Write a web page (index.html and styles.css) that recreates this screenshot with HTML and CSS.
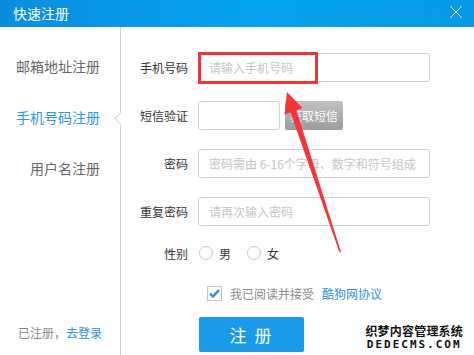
FILE: index.html
```html
<!DOCTYPE html>
<html lang="zh-CN">
<head>
    <meta charset="UTF-8">
    <meta name="viewport" content="width=device-width, initial-scale=1.0">
    <title>快速注册</title>
    <link rel="stylesheet" href="styles.css">
</head>
<body>
    <div class="dialog">
        <div class="header">
            <span class="title">快速注册</span>
            <svg class="close" width="12" height="12" viewBox="0 0 12 12">
                <path d="M0.5 0.5 L11.5 11.5 M11.5 0.5 L0.5 11.5" stroke="#fff" stroke-width="1" fill="none"/>
            </svg>
        </div>

        <div class="main">
            <div class="side">
                <div class="tab">邮箱地址注册</div>
                <div class="tab active">手机号码注册</div>
                <div class="tab">用户名注册</div>
                <div class="login-link">已注册，<a href="#">去登录</a></div>
                <span class="notch"></span>
            </div>

            <div class="form">
                <div class="row">
                    <label>手机号码</label>
                    <input type="text" class="field" placeholder="请输入手机号码">
                </div>
                <div class="row">
                    <label>短信验证</label>
                    <input type="text" class="field short">
                    <button class="sms-btn">获取短信</button>
                </div>
                <div class="row">
                    <label>密码</label>
                    <input type="password" class="field" placeholder="密码需由 6-16个字母、数字和符号组成">
                </div>
                <div class="row">
                    <label>重复密码</label>
                    <input type="password" class="field" placeholder="请再次输入密码">
                </div>
                <div class="row gender-row">
                    <label>性别</label>
                    <span class="radio"></span><span class="radio-text">男</span>
                    <span class="radio"></span><span class="radio-text">女</span>
                </div>
                <div class="agree-row">
                    <span class="checkbox">
                        <svg width="11" height="9" viewBox="0 0 11 9">
                            <path d="M1 4.5 L4 7.5 L10 1" stroke="#2a8de2" stroke-width="2.4" fill="none"/>
                        </svg>
                    </span>
                    <span class="agree-text">我已阅读并接受</span>
                    <a href="#" class="agree-link">酷狗网协议</a>
                </div>
                <button class="submit">注 册</button>
            </div>
        </div>

        <!-- annotation layered on the screenshot -->
        <div class="highlight"></div>
        <svg class="arrow" width="474" height="355" viewBox="0 0 474 355">
            <polygon points="287,92 302.5,108 296.5,110.5 341,252 339.5,252.4 290.5,112.5 284.5,114.5" fill="#f2363b"/>
        </svg>

        <div class="watermark">
            <div class="wm-cn">织梦内容管理系统</div>
            <div class="wm-en">DEDECMS.COM</div>
        </div>
    </div>
</body>
</html>
```

FILE: styles.css
```css
* {
    margin: 0;
    padding: 0;
    box-sizing: border-box;
}

body {
    width: 474px;
    height: 355px;
    overflow: hidden;
    background: #fff;
    font-family: "Noto Sans CJK SC", "DejaVu Sans", sans-serif;
}

.dialog {
    position: relative;
    width: 474px;
    height: 355px;
}

.header {
    height: 27px;
    display: flex;
    align-items: center;
    justify-content: space-between;
    padding: 0 12px 0 13px;
    background: linear-gradient(100deg, #0a8ce0 0%, #03a4ed 55%, #0898e5 100%);
}

.title {
    color: #fff;
    font-size: 14px;
    line-height: 16px;
    margin-top: -2px;
}

.close {
    display: block;
    margin-top: -3px;
}

.main {
    display: flex;
    height: 328px;
}

.side {
    position: relative;
    width: 121px;
    border-right: 1px solid #cfcfcf;
    display: flex;
    flex-direction: column;
    align-items: flex-end;
    padding: 14px 20px 12px 0;
}

.tab {
    position: relative;
    width: 101px;
    height: 51px;
    line-height: 51px;
    text-align: right;
    font-size: 14px;
    color: #666;
}

.tab.active {
    color: #2b95e8;
}

.tab.active::before {
    content: "";
    position: absolute;
    left: -20px;
    top: 17px;
    width: 2px;
    height: 18px;
    background: #2b95e8;
}

.notch {
    position: absolute;
    right: -5px;
    top: 87px;
    width: 9px;
    height: 9px;
    background: #fff;
    border-left: 1px solid #cfcfcf;
    border-bottom: 1px solid #cfcfcf;
    transform: rotate(45deg);
}

.login-link {
    margin-top: auto;
    align-self: flex-start;
    padding-left: 18px;
    white-space: nowrap;
    font-size: 12px;
    line-height: 20px;
    color: #888;
}

.login-link a,
.agree-link {
    color: #2b8fe0;
    text-decoration: none;
}

.form {
    flex: 1;
    padding-top: 26px;
}

.row {
    display: flex;
    align-items: center;
    height: 29px;
    margin-bottom: 19px;
}

.row label {
    width: 67px;
    text-align: right;
    font-size: 12px;
    color: #333;
    margin-right: 10px;
}

.field {
    width: 232px;
    height: 29px;
    border: 1px solid #d0d0d0;
    border-radius: 3px;
    padding: 0 10px;
    font-family: inherit;
    font-size: 12px;
    color: #333;
    outline: none;
}

.field::placeholder {
    color: #c4c4c4;
}

.field.short {
    width: 82px;
}

.sms-btn {
    margin-left: 5px;
    width: 58px;
    height: 29px;
    border: none;
    border-radius: 2px;
    background: linear-gradient(#c2c2c2, #9c9c9c);
    color: #fff;
    font-family: inherit;
    font-size: 12px;
}

.gender-row {
    height: 20px;
    margin-top: -2px;
    margin-bottom: 20px;
}

.gender-row label {
    margin-right: 11px;
}

.radio {
    width: 14px;
    height: 14px;
    border: 1px solid #c4c4c4;
    border-radius: 50%;
}

.radio-text {
    font-size: 12px;
    color: #333;
    margin-left: 6px;
    margin-right: 16px;
}

.agree-row {
    display: flex;
    align-items: center;
    height: 20px;
    padding-left: 86px;
}

.checkbox {
    width: 15px;
    height: 15px;
    border: 1px solid #c4c4c4;
    display: flex;
    align-items: center;
    justify-content: center;
}

.agree-text {
    margin-left: 8px;
    font-size: 12px;
    color: #888;
}

.agree-link {
    margin-left: 8px;
    font-size: 12px;
}

.submit {
    display: block;
    margin: 14px 0 0 78px;
    width: 105px;
    height: 35px;
    border: none;
    border-radius: 2px;
    background: #1a9bea;
    color: #fff;
    font-family: inherit;
    font-size: 17px;
    letter-spacing: 2px;
}

.highlight {
    position: absolute;
    left: 198px;
    top: 52px;
    width: 120px;
    height: 32px;
    border: 3px solid #f2333a;
}

.arrow {
    position: absolute;
    left: 0;
    top: 0;
    pointer-events: none;
}

.watermark {
    position: absolute;
    right: 11px;
    bottom: 4px;
    text-align: center;
    color: #111;
    font-weight: bold;
    text-shadow: 1px 0 #fff, -1px 0 #fff, 0 1px #fff, 0 -1px #fff,
                 1px 1px #fff, -1px -1px #fff, 1px -1px #fff, -1px 1px #fff;
}

.wm-cn {
    font-size: 12px;
    line-height: 15px;
    letter-spacing: 0.2px;
}

.wm-en {
    font-family: "DejaVu Sans Mono", monospace;
    font-size: 11px;
    line-height: 13px;
    letter-spacing: 2px;
}
```
